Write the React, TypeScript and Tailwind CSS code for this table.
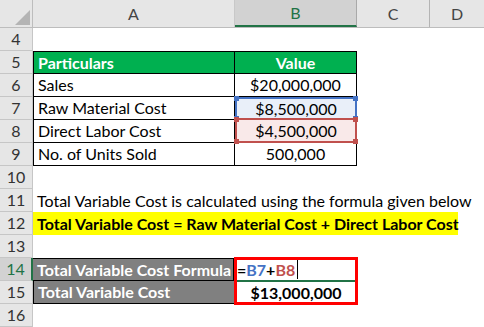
import type { ReactNode } from 'react'

const rowHead = 'flex w-[33px] shrink-0 items-center justify-center border-b border-r border-[#c6c6c6] bg-[#e6e6e6] text-[#333]'

function Row({ n, children, selected = false }: { n: number; children?: ReactNode; selected?: boolean }) {
  return (
    <div className="flex h-[23px] whitespace-nowrap">
      <div
        className={
          selected
            ? 'flex w-[33px] shrink-0 items-center justify-center border-b border-r-2 border-b-[#c6c6c6] border-r-[#217346] bg-[#d2d2d2] text-[#217346]'
            : rowHead
        }
      >
        {n}
      </div>
      {children}
    </div>
  )
}

function Corners({ color }: { color: string }) {
  return (
    <>
      <span className={`absolute -left-[3px] -top-[3px] h-[5px] w-[5px] ${color}`} />
      <span className={`absolute -right-[3px] -top-[3px] h-[5px] w-[5px] ${color}`} />
      <span className={`absolute -bottom-[3px] -left-[3px] h-[5px] w-[5px] ${color}`} />
      <span className={`absolute -bottom-[3px] -right-[3px] h-[5px] w-[5px] ${color}`} />
    </>
  )
}

function App() {
  const cellA = 'flex w-[202px] shrink-0 items-center border-b border-l border-r border-black px-[4px]'
  const cellB = 'flex w-[122px] shrink-0 items-center justify-center border-b border-r border-black'

  return (
    <div className="relative h-[327px] w-[484px] overflow-hidden bg-white text-[16px] leading-none text-black" style={{ fontFamily: 'Lato, "Liberation Sans", sans-serif' }}>
      {/* column headers */}
      <div className="flex h-[28px] border-b border-[#bdbdbd] bg-[#e6e6e6] text-[#444]">
        <div className="relative w-[33px] shrink-0 border-r border-[#bdbdbd]">
          <svg className="absolute left-[15px] top-[10px]" width="15" height="15" viewBox="0 0 15 15">
            <polygon points="15,0 15,15 0,15" fill="#b4b4b4" />
          </svg>
        </div>
        <div className="flex w-[202px] shrink-0 items-center justify-center border-r border-[#c8c8c8]">A</div>
        <div className="flex w-[122px] shrink-0 items-center justify-center border-r border-b-2 border-r-[#a9a9a9] border-b-[#217346] bg-[#d2d2d2] text-[#217346]">B</div>
        <div className="flex w-[73px] shrink-0 items-center justify-center border-r border-[#b4b4b4]">C</div>
        <div className="flex flex-1 items-center justify-center">D</div>
      </div>

      <Row n={4} />
      <Row n={5}>
        <div className={`${cellA} border-t bg-[#00b050] font-bold text-white`}>Particulars</div>
        <div className={`${cellB} border-t bg-[#00b050] font-bold text-white`}>Value</div>
      </Row>
      <Row n={6}>
        <div className={cellA}>Sales</div>
        <div className={cellB}>$20,000,000</div>
      </Row>
      <Row n={7}>
        <div className={cellA}>Raw Material Cost</div>
        <div className="relative flex w-[122px] shrink-0 items-center justify-center border-2 border-[#4472c4] bg-[#e9eff9]">
          $8,500,000
          <Corners color="bg-[#4472c4]" />
        </div>
      </Row>
      <Row n={8}>
        <div className={cellA}>Direct Labor Cost</div>
        <div className="relative -mt-[2px] flex h-[25px] w-[122px] shrink-0 items-center justify-center border-2 border-[#c0504d] bg-[#f9e9e9]">
          $4,500,000
          <Corners color="bg-[#c0504d]" />
        </div>
      </Row>
      <Row n={9}>
        <div className={cellA}>No. of Units Sold</div>
        <div className={cellB}>500,000</div>
      </Row>
      <Row n={10} />
      <Row n={11}>
        <div className="flex items-center px-[4px]">Total Variable Cost is calculated using the formula given below</div>
      </Row>
      <Row n={12}>
        <div className="flex w-[425px] shrink-0 items-center bg-[#ffff00] px-[4px] font-bold">
          Total Variable Cost = Raw Material Cost + Direct Labor Cost
        </div>
      </Row>
      <Row n={13} />
      <Row n={14} selected>
        <div className="flex w-[201px] shrink-0 items-center border-y border-r border-black bg-[#808080] px-[4px] font-bold text-white">
          Total Variable Cost Formula
        </div>
        <div className="relative flex w-[122px] shrink-0 items-center px-[3px] font-bold">
          <span>=</span>
          <span className="text-[#4472c4]">B7</span>
          <span>+</span>
          <span className="text-[#c0504d]">B8</span>
          <span className="ml-[2px] h-[19px] w-px bg-black" />
          <span className="absolute -bottom-[1px] left-0 h-[2px] w-[124px] bg-[#217346]" />
        </div>
      </Row>
      <Row n={15}>
        <div className="flex w-[202px] shrink-0 items-center border-b border-l border-r border-black bg-[#808080] px-[4px] font-bold text-white">
          Total Variable Cost
        </div>
        <div className="flex w-[122px] shrink-0 items-center justify-center font-bold">$13,000,000</div>
      </Row>
      <Row n={16} />

      {/* red highlight around B14:B15 */}
      <div className="pointer-events-none absolute left-[234px] top-[257px] h-[48px] w-[124px] border-[3px] border-[#ff0000]" />
    </div>
  )
}

export default App
